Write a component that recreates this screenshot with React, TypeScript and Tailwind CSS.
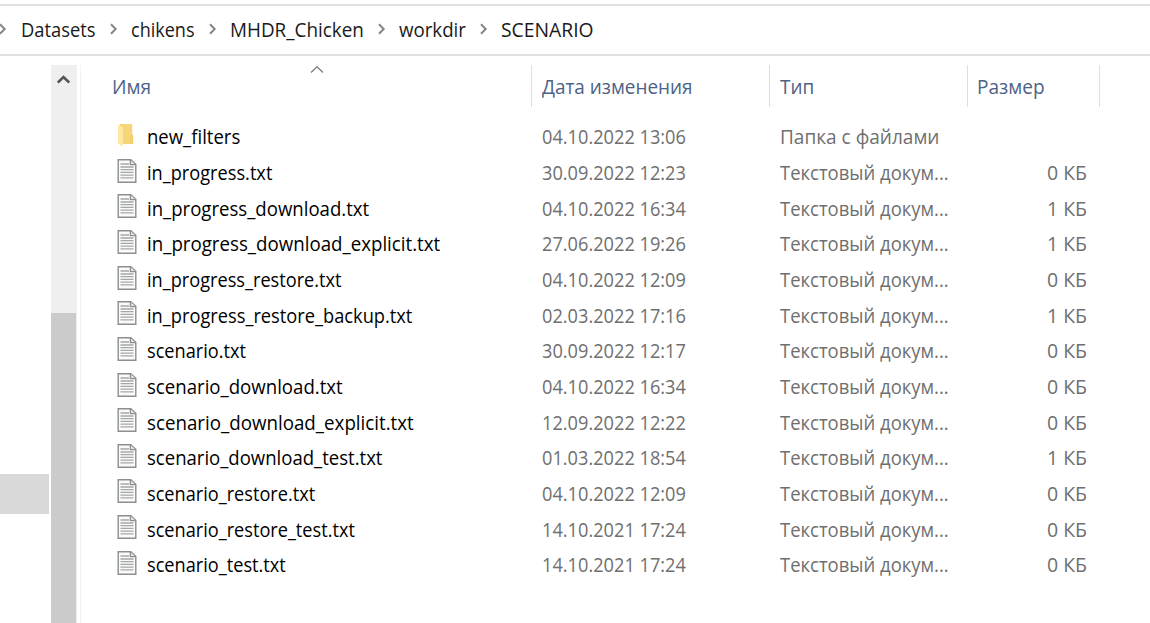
type Row = { name: string; date: string; size?: string; fit: string };

const rows: Row[] = [
  { name: 'new_filters', date: '04.10.2022 13:06', fit: 'scale-x-[0.95]' },
  { name: 'in_progress.txt', date: '30.09.2022 12:23', size: '0 КБ', fit: 'scale-x-[0.933]' },
  { name: 'in_progress_download.txt', date: '04.10.2022 16:34', size: '1 КБ', fit: 'scale-x-[0.953]' },
  { name: 'in_progress_download_explicit.txt', date: '27.06.2022 19:26', size: '1 КБ', fit: 'scale-x-[0.959]' },
  { name: 'in_progress_restore.txt', date: '04.10.2022 12:09', size: '0 КБ', fit: 'scale-x-[0.932]' },
  { name: 'in_progress_restore_backup.txt', date: '02.03.2022 17:16', size: '1 КБ', fit: 'scale-x-[0.936]' },
  { name: 'scenario.txt', date: '30.09.2022 12:17', size: '0 КБ', fit: 'scale-x-[0.932]' },
  { name: 'scenario_download.txt', date: '04.10.2022 16:34', size: '0 КБ', fit: 'scale-x-[0.955]' },
  { name: 'scenario_download_explicit.txt', date: '12.09.2022 12:22', size: '0 КБ', fit: 'scale-x-[0.961]' },
  { name: 'scenario_download_test.txt', date: '01.03.2022 18:54', size: '1 КБ', fit: 'scale-x-[0.951]' },
  { name: 'scenario_restore.txt', date: '04.10.2022 12:09', size: '0 КБ', fit: 'scale-x-[0.931]' },
  { name: 'scenario_restore_test.txt', date: '14.10.2021 17:24', size: '0 КБ', fit: 'scale-x-[0.931]' },
  { name: 'scenario_test.txt', date: '14.10.2021 17:24', size: '0 КБ', fit: 'scale-x-[0.932]' },
];

const crumbs = [
  { label: 'Datasets', box: 'w-[110px]', fit: 'scale-x-[0.94]' },
  { label: 'chikens', box: 'w-[99px]', fit: 'scale-x-[0.925]' },
  { label: 'MHDR_Chicken', box: 'w-[169px]', fit: 'scale-x-[0.968]' },
  { label: 'workdir', box: 'w-[102px]', fit: 'scale-x-[0.958]' },
  { label: 'SCENARIO', box: 'w-[120px]', fit: 'scale-x-[0.99]' },
];

function Chevron() {
  return (
    <svg className="mb-0.5 h-3 w-2 shrink-0" viewBox="0 0 8 12" fill="none" stroke="#858585" strokeWidth="2">
      <path d="M1 1.2 5.7 6 1 10.8" />
    </svg>
  );
}

function FileIcon() {
  return (
    <svg className="h-6 w-5" viewBox="0 0 20 24" fill="none">
      <path d="M1.2.7h12.6l5 4.6v18H1.2z" fill="#fafafa" stroke="#8c8f8f" strokeWidth="1.4" />
      <path d="M13.4 1v4.7h5.2" fill="#e4e4e4" stroke="#8c8f8f" strokeWidth="1.3" />
      <path d="M3.5 5h8.5M3.5 8h13M3.5 10.7h13M3.5 13.4h13M3.5 16.1h13M3.5 18.8h13" stroke="#a5a8a8" strokeWidth="1.3" />
    </svg>
  );
}

function FolderIcon() {
  return (
    <svg className="h-6 w-5" viewBox="0 0 20 24" fill="none">
      <path d="M3 1h11.2q1 0 1 1v9.2l1 1V20q0 1-1 1H3z" fill="#f3ce6b" />
      <path d="M4.5 1H15v10.5l-2 2V21H5z" fill="#f7d67b" />
      <path d="M1 1.2 5.2 4q.7.4.7 1.2v17.1q0 1-.9.7L1.5 21q-.5-.3-.5-.9z" fill="#ffe9a2" />
    </svg>
  );
}

export default function App() {
  return (
    <div className="flex h-[623px] w-[1150px] flex-col overflow-hidden bg-white font-['Open_Sans','Noto_Sans',sans-serif] text-[19.5px] leading-[26px] whitespace-nowrap text-black">
      <div className="mt-1 flex h-[52px] shrink-0 items-center border-y-2 border-[#e0e0e0]">
        <div className="-ml-px flex w-[22px]"><Chevron /></div>
        {crumbs.map((c, i) => (
          <div key={c.label} className={`flex shrink-0 items-center justify-between ${c.box}`}>
            <span className={`inline-block origin-left text-[#191919] ${c.fit}`}>{c.label}</span>
            {i < crumbs.length - 1 && <div className="mr-[13px] flex"><Chevron /></div>}
          </div>
        ))}
      </div>
      <div className="mt-[9px] flex min-h-0 flex-1">
        <div className="w-[51px] shrink-0 pt-[409px]">
          <div className="h-10 w-[49px] bg-[#d9d9d9]" />
        </div>
        <div className="flex w-[26px] shrink-0 flex-col bg-[#efefef] pr-px">
          <div className="flex h-[248px] justify-center pt-2.5">
            <svg className="h-[9px] w-[13px]" viewBox="0 0 13 9" fill="none" stroke="#555" strokeWidth="2.6">
              <path d="M.8 7.6 6.5 2l5.7 5.6" />
            </svg>
          </div>
          <div className="flex-1 bg-[#cbcbcb]" />
        </div>
        <div className="ml-[3px] w-px shrink-0 bg-[#f2f2f2]" />
        <div className="flex flex-1 flex-col">
          <div className="flex h-[42px] shrink-0 text-[#4d6285]">
            <div className="flex w-[451px] border-r border-[#dedede] pt-[9px] pl-[31px]">
              <div className="w-[198px]"><span className="inline-block origin-left scale-x-[0.98]">Имя</span></div>
              <svg className="-mt-2 h-[7px] w-[14px]" viewBox="0 0 14 7" fill="none" stroke="#777" strokeWidth="1.2">
                <path d="M1 6.5 7 .8l6 5.7" />
              </svg>
            </div>
            <div className="w-[238px] border-r border-[#dedede] pt-[9px] pl-[10px]">
              <span className="inline-block origin-left scale-x-[0.97]">Дата изменения</span>
            </div>
            <div className="w-[198px] border-r border-[#dedede] pt-[9px] pl-[10px]">
              <span className="inline-block origin-left scale-x-[0.97]">Тип</span>
            </div>
            <div className="w-[132px] border-r border-[#dedede] pt-[9px] pl-[9px]">
              <span className="inline-block origin-left scale-x-[0.978]">Размер</span>
            </div>
          </div>
          <div className="mt-[12.6px] flex flex-col">
            {rows.map((r) => (
              <div key={r.name} className="flex h-[35.67px] items-center text-[#6f6f6f]">
                <div className="flex w-[461px] items-center pl-9">
                  <div className="mb-[5px] w-[30px]">{r.size ? <FileIcon /> : <FolderIcon />}</div>
                  <span className={`inline-block origin-left text-black ${r.fit}`}>{r.name}</span>
                </div>
                <div className="w-[238px]"><span className="inline-block origin-left scale-x-[0.933]">{r.date}</span></div>
                <div className="w-[187px]">
                  {r.size ? (
                    <span className="inline-block origin-left scale-x-[0.947]">Текстовый докум...</span>
                  ) : (
                    <span className="inline-block origin-left scale-x-[0.976]">Папка с файлами</span>
                  )}
                </div>
                <div className="w-[120px] text-right">{r.size}</div>
              </div>
            ))}
          </div>
        </div>
      </div>
    </div>
  );
}
